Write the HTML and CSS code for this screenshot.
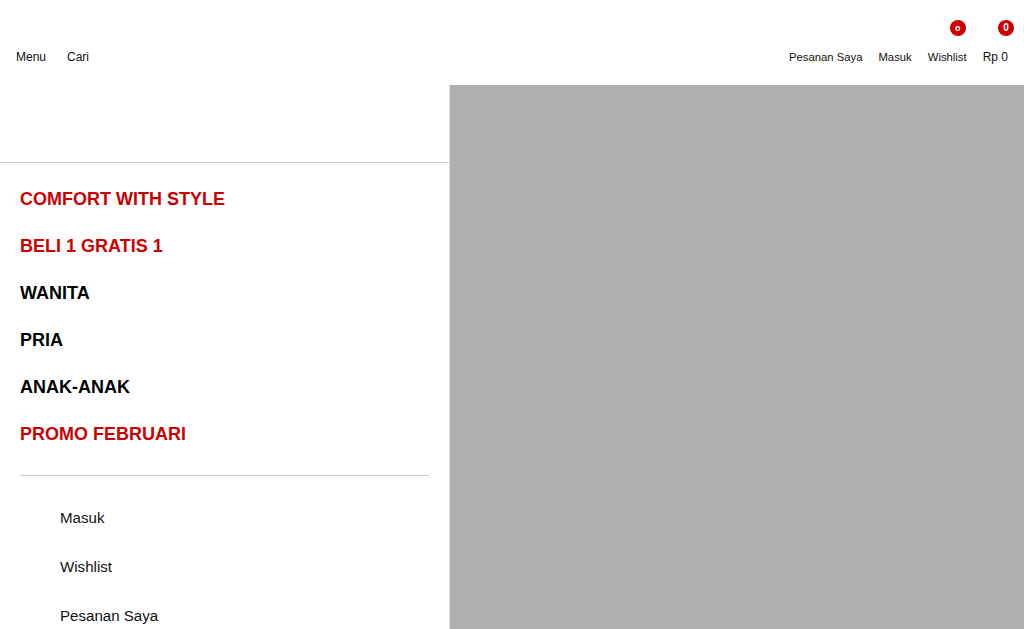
FILE: index.html
```html
<!DOCTYPE html>
<html lang="id">
<head>
  <meta charset="UTF-8" />
  <title>Menu</title>
  <link rel="stylesheet" href="styles.css">
</head>
<body>
  <header class="top-bar">
    <div class="top-left">
      <a href="#">Menu</a>
      <a href="#">Cari</a>
    </div>
    <div class="top-right">
      <a href="#" class="small-link">Pesanan Saya</a>
      <a href="#" class="small-link">Masuk</a>
      <a href="#" class="small-link has-badge">Wishlist<span class="badge badge-small">o</span></a>
      <a href="#" class="has-badge">Rp 0<span class="badge badge-cart">0</span></a>
    </div>
  </header>

  <div class="page">
    <aside class="drawer">
      <div class="drawer-top"></div>
      <nav class="main-nav">
        <a href="#" class="red">COMFORT WITH STYLE</a>
        <a href="#" class="red">BELI 1 GRATIS 1</a>
        <a href="#">WANITA</a>
        <a href="#">PRIA</a>
        <a href="#">ANAK-ANAK</a>
        <a href="#" class="red">PROMO FEBRUARI</a>
      </nav>
      <nav class="sub-nav">
        <a href="#">Masuk</a>
        <a href="#">Wishlist</a>
        <a href="#">Pesanan Saya</a>
      </nav>
    </aside>
    <div class="overlay"></div>
  </div>
</body>
</html>
```

FILE: styles.css
```css
* {
  box-sizing: border-box;
}
html, body {
  height: 100%;
}
body {
  margin: 0;
  font-family: 'Liberation Sans', Arial, sans-serif;
  color: #111;
  background: #fff;
  overflow: hidden;
  display: flex;
  flex-direction: column;
}
a {
  color: inherit;
  text-decoration: none;
}
.top-bar {
  height: 85px;
  flex: none;
  display: flex;
  justify-content: space-between;
  align-items: flex-start;
  padding: 50px 16px 0;
  font-size: 12px;
  line-height: 14px;
}
.top-left {
  display: flex;
  gap: 21px;
}
.top-right {
  display: flex;
  gap: 16px;
}
.small-link {
  font-size: 11.3px;
}
.has-badge {
  position: relative;
}
.badge {
  position: absolute;
  top: -30px;
  right: 1px;
  width: 16px;
  height: 16px;
  border-radius: 50%;
  background: #cc0000;
  color: #fff;
  font-size: 10px;
  font-weight: 700;
  line-height: 16px;
  text-align: center;
}
.badge-small {
  font-size: 9px;
}
.badge-cart {
  right: -6px;
}
.page {
  flex: 1;
  display: flex;
  min-height: 0;
}
.drawer {
  width: 450px;
  flex: none;
  overflow: hidden;
  border-right: 1px solid #ddd;
}
.drawer-top {
  height: 78px;
  border-bottom: 1px solid #ccc;
}
.main-nav {
  margin: 0 20px;
  padding: 13px 0 17px;
  border-bottom: 1px solid #ccc;
  display: flex;
  flex-direction: column;
}
.main-nav a {
  height: 47px;
  font-size: 18px;
  font-weight: 700;
  line-height: 47px;
  color: #000;
}
.main-nav .red {
  color: #cc0000;
}
.sub-nav {
  padding: 17px 0 0 60px;
  display: flex;
  flex-direction: column;
}
.sub-nav a {
  height: 49px;
  font-size: 15.1px;
  line-height: 49px;
}
.overlay {
  flex: 1;
  background: #b0b0b0;
}
```
